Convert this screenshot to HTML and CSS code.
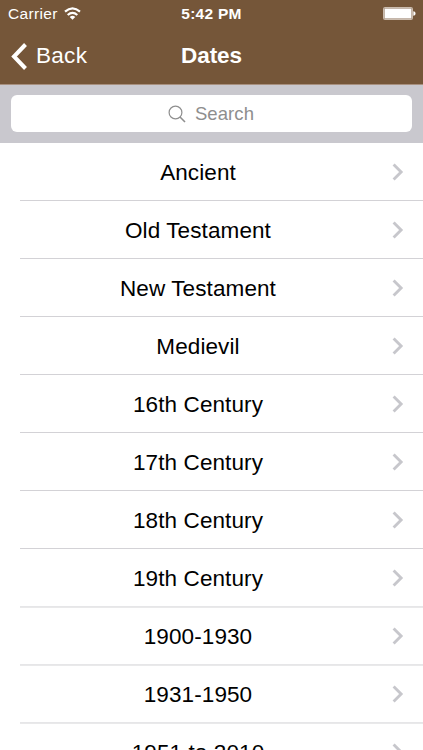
FILE: index.html
```html
<!DOCTYPE html>
<html lang="en">
<head>
<meta charset="utf-8">
<title>Dates</title>
<link rel="stylesheet" href="styles.css">
</head>
<body>
<svg class="defs" aria-hidden="true">
  <symbol id="chevron" viewBox="0 0 12 18"><path d="M1.600 1.500 9.100 9l-7.500 7.500" fill="none" stroke="#c7c7cc" stroke-width="2.900"/></symbol>
</svg>
<header class="header">
  <div class="status">
    <div class="carrier"><span>Carrier</span>
      <svg class="wifi" viewBox="0 0 17 13" fill="none" stroke="#fff" stroke-width="2.200"><path d="M1 4.700Q8.500-1.900 16 4.700M3.700 8Q8.500 3.700 13.300 8"/><path d="M5.700 10Q8.500 7.500 11.300 10L8.500 12.800Z" fill="#fff" stroke="none"/></svg>
    </div>
    <div class="time">5:42 PM</div>
    <svg class="battery" viewBox="0 0 33 13"><rect x=".6" y=".6" width="28.800" height="11.800" rx="1.500" fill="none" stroke="#cbbcae" stroke-width="1.200"/><rect x="1.500" y="1.500" width="27" height="10" rx=".5" fill="#fff"/><path d="M30.300 4.300c3 .3 3 4.100 0 4.400z" fill="#fff"/></svg>
  </div>
  <nav class="nav">
    <a class="back"><svg viewBox="0 0 17 27"><path d="M15.500 1.500 4 13.500l11.500 12" fill="none" stroke="#fff" stroke-width="4"/></svg><span>Back</span></a>
    <h1 class="title">Dates</h1>
    <span></span>
  </nav>
</header>
<div class="searchbar">
  <div class="field"><svg viewBox="0 0 18 18" fill="none" stroke="#8e8e8e"><circle cx="7.500" cy="7.500" r="6.400" stroke-width="1.200"/><path d="m12 12 5 5" stroke-width="1.600"/></svg><span>Search</span></div>
</div>
<ul class="list">
  <li class="row"><span>Ancient</span><svg><use href="#chevron"/></svg></li>
  <li class="row"><span>Old Testament</span><svg><use href="#chevron"/></svg></li>
  <li class="row"><span>New Testament</span><svg><use href="#chevron"/></svg></li>
  <li class="row"><span>Medievil</span><svg><use href="#chevron"/></svg></li>
  <li class="row"><span>16th Century</span><svg><use href="#chevron"/></svg></li>
  <li class="row"><span>17th Century</span><svg><use href="#chevron"/></svg></li>
  <li class="row"><span>18th Century</span><svg><use href="#chevron"/></svg></li>
  <li class="row soft"><span>19th Century</span><svg><use href="#chevron"/></svg></li>
  <li class="row soft"><span>1900-1930</span><svg><use href="#chevron"/></svg></li>
  <li class="row soft"><span>1931-1950</span><svg><use href="#chevron"/></svg></li>
  <li class="row"><span>1951 to 2010</span><svg><use href="#chevron"/></svg></li>
</ul>
</body>
</html>
```
FILE: styles.css
```css
* { box-sizing: border-box; }
body {
  margin: 0;
  height: 750px;
  overflow: hidden;
  display: flex;
  flex-direction: column;
  background: #fff;
  color: #000;
  font-family: "Liberation Sans", Helvetica, Arial, sans-serif;
}
.defs { position: absolute; width: 0; height: 0; }
.header { flex: none; height: 85px; background: #755639; color: #fff; border-bottom: 1px solid #a8907f; }
.status {
  display: grid;
  grid-template-columns: 1fr auto 1fr;
  align-items: center;
  height: 27px;
  padding: 0 7px 0 8px;
}
.carrier { display: flex; align-items: center; gap: 6px; font-size: 15.5px; letter-spacing: 0.35px; }
.wifi { width: 17px; height: 13px; }
.time { font-size: 15.5px; font-weight: bold; letter-spacing: 0.25px; margin-right: 1px; }
.battery { width: 33px; height: 13px; justify-self: end; }
.nav {
  display: grid;
  grid-template-columns: 1fr auto 1fr;
  align-items: center;
  height: 58px;
  padding: 0 10px;
}
.back { display: flex; align-items: center; gap: 9px; font-size: 22.5px; letter-spacing: 0.3px; }
.back svg { width: 17px; height: 27px; }
.title { margin: 0; font-size: 22.5px; font-weight: bold; letter-spacing: -0.1px; }
.searchbar { flex: none; height: 58px; padding: 10px 11px 11px; background: #c9c8ce; }
.field {
  display: flex;
  align-items: center;
  justify-content: center;
  gap: 9px;
  height: 37px;
  padding-right: 1px;
  border-radius: 6px;
  background: #fff;
  color: #8e8e8e;
  font-size: 18.5px;
  letter-spacing: 0.1px;
}
.field svg { width: 18px; height: 18px; }
.list { flex: none; margin: 0; padding: 0 0 0 20px; list-style: none; }
.row {
  display: flex;
  align-items: center;
  height: 58px;
  padding-right: 19px;
  border-bottom: 1px solid #d3d2d6;
  font-size: 22.5px;
  letter-spacing: 0.1px;
}
.soft { border-bottom-color: #e6e6e8; box-shadow: 0 1px 0 #e9e9ea; }
.row span { flex: 1; text-align: center; padding: 2px 16px 0 0; }
.row svg { flex: none; width: 12px; height: 18px; }
```
